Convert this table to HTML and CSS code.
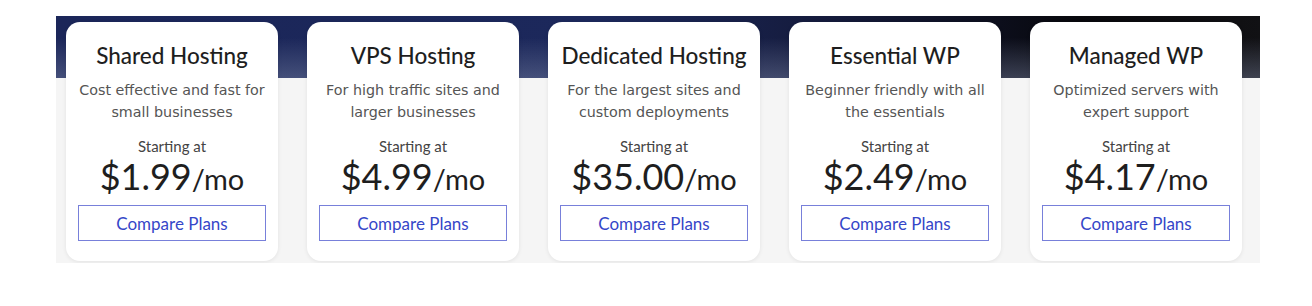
FILE: index.html
```html
<!DOCTYPE html>
<html>
<head>
<meta charset="utf-8">
<link rel="stylesheet" href="styles.css">
</head>
<body>
<section class="plans">
  <div class="card">
    <h2 class="title">Shared Hosting</h2>
    <p class="desc">Cost effective and fast for small businesses</p>
    <div class="starting">Starting at</div>
    <div class="price">$1.99<span class="per">/mo</span></div>
    <a class="btn">Compare Plans</a>
  </div>
  <div class="card">
    <h2 class="title">VPS Hosting</h2>
    <p class="desc">For high traffic sites and larger businesses</p>
    <div class="starting">Starting at</div>
    <div class="price">$4.99<span class="per">/mo</span></div>
    <a class="btn">Compare Plans</a>
  </div>
  <div class="card">
    <h2 class="title">Dedicated Hosting</h2>
    <p class="desc">For the largest sites and custom deployments</p>
    <div class="starting">Starting at</div>
    <div class="price">$35.00<span class="per">/mo</span></div>
    <a class="btn">Compare Plans</a>
  </div>
  <div class="card">
    <h2 class="title">Essential WP</h2>
    <p class="desc">Beginner friendly with all the essentials</p>
    <div class="starting">Starting at</div>
    <div class="price">$2.49<span class="per">/mo</span></div>
    <a class="btn">Compare Plans</a>
  </div>
  <div class="card">
    <h2 class="title">Managed WP</h2>
    <p class="desc">Optimized servers with expert support</p>
    <div class="starting">Starting at</div>
    <div class="price">$4.17<span class="per">/mo</span></div>
    <a class="btn">Compare Plans</a>
  </div>
</section>
</body>
</html>
```
FILE: styles.css
```css
html, body {
  margin: 0;
  padding: 0;
  background: #ffffff;
}
body {
  padding: 16px 52px 0 56px;
}
.plans {
  display: grid;
  grid-template-columns: repeat(5, 212px);
  column-gap: 29px;
  padding: 6px 18px 2px 10px;
  height: 239px;
  background:
    linear-gradient(to bottom, rgba(255,255,255,0) 0%, rgba(255,255,255,0) 35%, rgba(130,140,170,0.4) 100%) top left / 100% 62px no-repeat,
    linear-gradient(90deg, #1b2659 0%, #1c285b 45%, #141a3a 65%, #08080c 85%, #111114 100%) top left / 100% 62px no-repeat,
    #f5f5f5;
}
.card {
  background: #ffffff;
  border-radius: 14px;
  box-shadow: 0 1px 4px rgba(0,0,0,0.08);
  display: flex;
  flex-direction: column;
  align-items: center;
  padding: 0 12px;
  text-align: center;
  color: #222222;
}
.title {
  margin: 20px 0 0;
  font-family: "Lato", "Noto Sans", sans-serif;
  font-weight: 500;
  font-size: 22.5px;
  line-height: 28px;
  color: #1e1e1e;
}
.desc {
  margin: 9px -8px 0;
  font-family: "DejaVu Sans", sans-serif;
  font-size: 14.3px;
  line-height: 22px;
  color: #555555;
}
.starting {
  margin-top: 14px;
  font-family: "Lato", "Noto Sans", sans-serif;
  font-size: 15px;
  line-height: 18px;
  color: #444444;
}
.price {
  font-family: "Lato", "Noto Sans", sans-serif;
  font-size: 36px;
  line-height: 42px;
  font-weight: 400;
  color: #1e1e1e;
}
.per {
  font-size: 29px;
  line-height: 1;
}
.btn {
  margin-top: 8px;
  align-self: stretch;
  height: 34px;
  border: 1px solid #7880da;
  display: flex;
  align-items: center;
  justify-content: center;
  font-family: "Lato", "Noto Sans", sans-serif;
  font-size: 17px;
  color: #3546c8;
}
```
